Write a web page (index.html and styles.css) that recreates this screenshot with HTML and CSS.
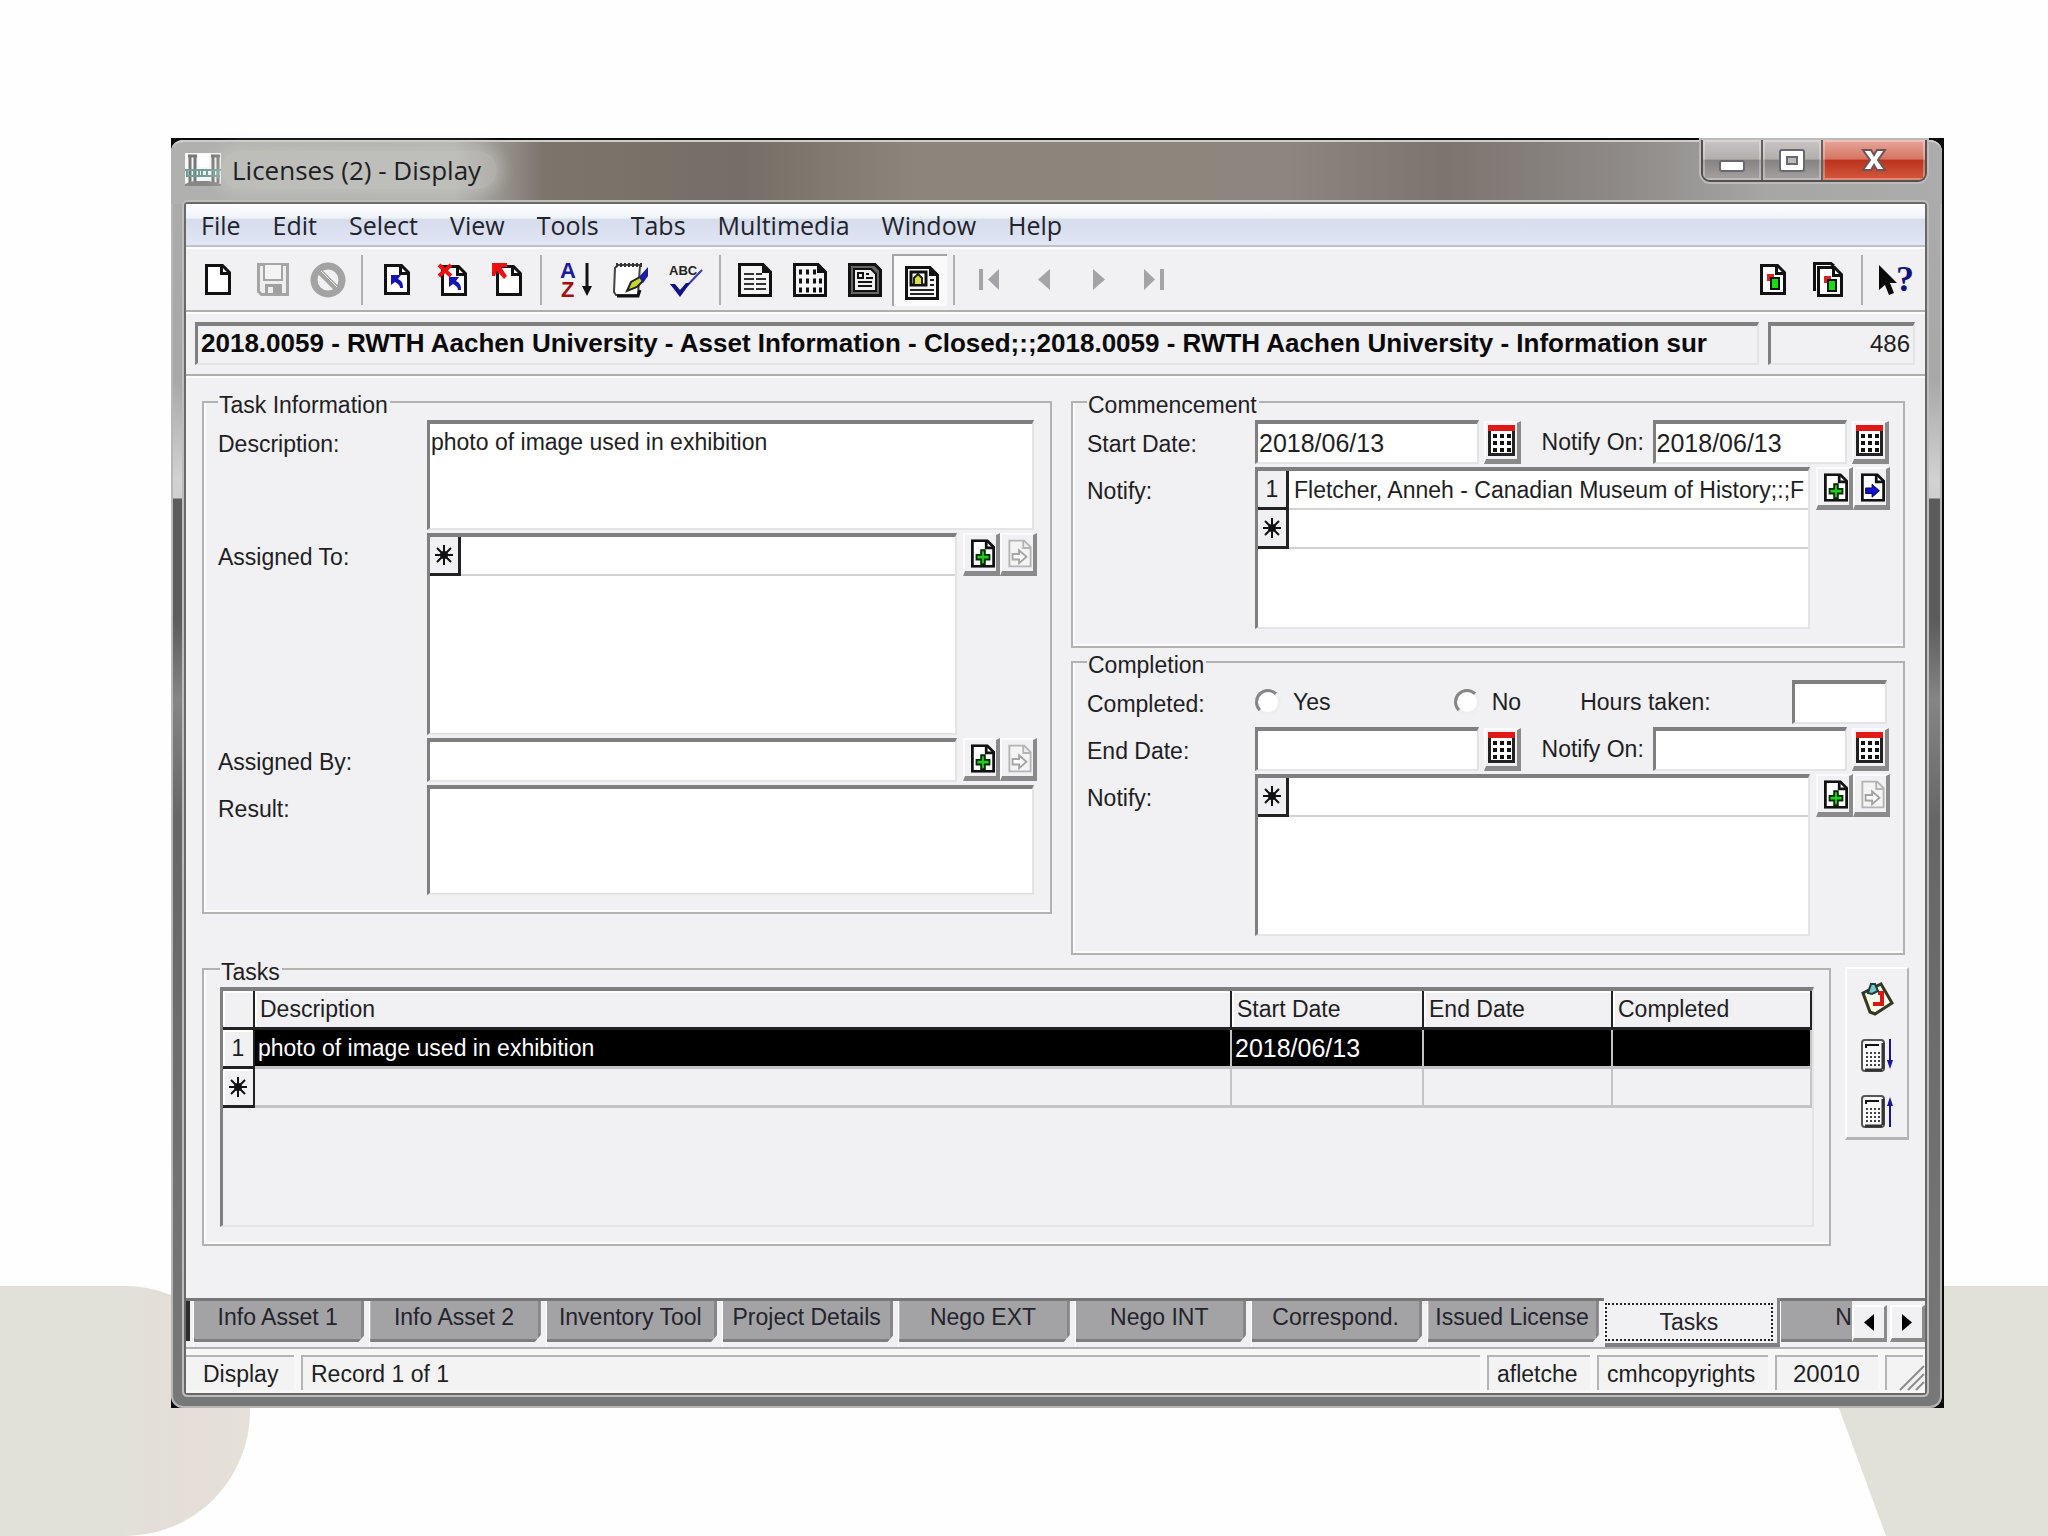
FILE: index.html
```html
<!DOCTYPE html>
<html lang="en">
<head>
<meta charset="utf-8">
<title>Licenses (2) - Display</title>
<link rel="stylesheet" href="styles.css">
</head>
<body>
<svg class="defs" aria-hidden="true">
  <symbol id="page" viewBox="0 0 26 31"><path d="M1.500 1.500H17.500L24.500 8.500V29.500H1.500Z" fill="#fff" stroke="#111" stroke-width="3"/><path d="M16.500 2V9.500H24" fill="none" stroke="#111" stroke-width="3"/></symbol>
  <symbol id="add" viewBox="0 0 26 31"><use href="#page"/><path d="M11 12h4v5h5v5h-5v5h-4v-5H6v-5h5z" fill="#1fd01f" stroke="#042a04" stroke-width="2"/></symbol>
  <symbol id="go" viewBox="0 0 26 31"><use href="#page"/><path d="M5 16h7v-4l8 7-8 7v-4H5z" fill="#1010d0" stroke="#000040" stroke-width="1"/></symbol>
  <symbol id="go-off" viewBox="0 0 26 31"><path d="M1.500 1.500H17.500L24.500 8.500V29.500H1.500ZM16.500 2V9.500H24" fill="#f4f4f4" stroke="#b4b4b4" stroke-width="2"/><path d="M5 16h7v-4l8 7-8 7v-4H5z" fill="#fff" stroke="#a4a4a4" stroke-width="2"/></symbol>
  <symbol id="calendar" viewBox="0 0 27 31"><path d="M1.500 2V29.500H25.500V2Z" fill="#fff" stroke="#222" stroke-width="3"/><path d="M0 0H27V6H0Z" fill="#e01818"/><path d="M5 11h4m3 0h4m3 0h4M5 18h4m3 0h4m3 0h4M5 25h4m3 0h4m3 0h4" stroke="#111" stroke-width="4"/></symbol>
  <symbol id="star" viewBox="0 0 22 22"><path d="M11 1V21M2 11H20M4 4L18 18M18 4L4 18" stroke="#111" stroke-width="2"/><circle cx="11" cy="11" r="4" fill="#111"/></symbol>
  <symbol id="calc" viewBox="0 0 24 33"><rect x="1" y="1" width="22" height="31" rx="3" fill="#fafafa" stroke="#555" stroke-width="2"/><path d="M22 4v26M4 31h17" stroke="#333" stroke-width="3"/><path d="M5 9V6h13" fill="none" stroke="#111" stroke-width="2"/><path d="M5 14h14M5 18h14M5 22h14M5 26h14" stroke="#444" stroke-width="2" stroke-dasharray="2 2"/></symbol>
</svg>
<div class="shape shape-left"></div>
<div class="shape shape-right"></div>

<main class="window">
 <div class="frame">
  <header class="titlebar">
    <svg class="app-icon" viewBox="0 0 36 33"><path d="M0 0H36V33H0Z" fill="#f8f8f8"/><path d="M3 3h9M26 3h9M5 4v26M10 4v26M28 4v26M33 4v26" stroke="#777" stroke-width="3"/><path d="M0 31c8-4 12-3 18-3s12 0 18 3v2H0z" fill="#888"/><path d="M0 17h36M1 23h34M2 16v8M9 17h5v6H9zM17 17h5v6h-5zM25 17h4v6M33 16v9" fill="none" stroke="#6fa096" stroke-width="2"/><path d="M13 1h11v13H13z" fill="#fff"/></svg>
    <h1 class="title">Licenses (2) - Display</h1>
    <div class="caption">
      <button class="cap cap-min" aria-label="Minimize"><svg width="28" height="14"><rect x="2" y="2" width="24" height="10" rx="2" fill="#fff" stroke="#666873" stroke-width="2"/></svg></button>
      <button class="cap cap-max" aria-label="Maximize"><svg width="28" height="25"><rect x="2" y="2" width="24" height="21" rx="2" fill="#fff" stroke="#666873" stroke-width="2"/><rect x="9" y="9" width="10" height="7" fill="#bbb" stroke="#666873" stroke-width="2"/></svg></button>
      <button class="cap cap-close" aria-label="Close"><svg width="28" height="26"><path d="M3 3h8l3 5 3-5h8l-7 10 7 10h-8l-3-5-3 5H3l7-10z" fill="#fff" stroke="#6b5558" stroke-width="2"/></svg></button>
    </div>
  </header>

  <div class="client">
    <nav class="menubar">
      <a href="#">File</a><a href="#">Edit</a><a href="#">Select</a><a href="#">View</a><a href="#">Tools</a><a href="#">Tabs</a><a href="#">Multimedia</a><a href="#">Window</a><a href="#">Help</a>
    </nav>

    <div class="toolbar">
      <button class="tool" aria-label="New"><svg width="26" height="31"><use href="#page"/></svg></button>
      <button class="tool" aria-label="Save"><svg width="32" height="33" viewBox="0 0 32 33"><path d="M1.500 1.500H30.500V31.500H4.500L1.500 28.500Z" fill="#eee" stroke="#a5a5a5" stroke-width="3"/><path d="M7 2V17H25V2" fill="#f4f4f4" stroke="#a5a5a5" stroke-width="2"/><path d="M8 21H25V31H8Z" fill="#a0a0a0"/><path d="M11 24h5v6h-5z" fill="#eee"/></svg></button>
      <button class="tool" aria-label="Cancel"><svg width="36" height="36" viewBox="0 0 36 36"><circle cx="18" cy="18" r="14" fill="none" stroke="#a3a3a3" stroke-width="7"/><path d="M8 8L28 28" stroke="#a3a3a3" stroke-width="6"/><path d="M11 9L27 25" stroke="#f2f2f2" stroke-width="1"/></svg></button>
      <span class="sep"></span>
      <button class="tool" aria-label="Attach"><svg width="26" height="31" viewBox="0 0 26 31"><use href="#page"/><path d="M7 11h10l-3 4c4 2 5 4 5 9h-3c0-3-2-4-5-6l-4 3z" fill="#1414b8"/></svg></button>
      <button class="tool" aria-label="Discard and attach"><svg width="30" height="33" viewBox="0 0 30 33"><g transform="translate(4 2)"><use href="#page" width="26" height="31"/><path d="M8 12h10l-3 4c4 2 5 4 5 9h-3c0-3-2-4-5-6l-4 3z" fill="#1414b8"/></g><path d="M2 2L14 13M14 2L2 13" stroke="#ee1010" stroke-width="4"/></svg></button>
      <button class="tool" aria-label="Discard"><svg width="30" height="33" viewBox="0 0 30 33"><use href="#page" x="4" y="2" width="26" height="31"/><path d="M0 0h15v4H9l6 9-3 3-7-8-2 5H0z" fill="#ee1010"/></svg></button>
      <span class="sep"></span>
      <button class="tool" aria-label="Sort"><svg width="32" height="36" viewBox="0 0 32 36"><text x="0" y="16" class="az" fill="#1c1c9c">A</text><text x="1" y="35" class="az" fill="#a01010">Z</text><path d="M27 1V28" stroke="#111" stroke-width="3"/><path d="M22 24h10l-5 10z" fill="#111"/></svg></button>
      <button class="tool" aria-label="Edit notes"><svg width="36" height="36" viewBox="0 0 36 36"><path d="M2 6L5 3H27L25 33H3L1 30Z" fill="#fff" stroke="#444" stroke-width="2"/><path d="M4 34H25L27 28" fill="none" stroke="#111" stroke-width="3"/><path d="M3 3H29" stroke="#333" stroke-width="4" stroke-dasharray="2 2"/><path d="M14 29l4-9 9-5 3 4-6 6z" fill="#c9d62e" stroke="#222" stroke-width="2"/><path d="M26 15l9-10v9l-5 7z" fill="#1c1ca8"/></svg></button>
      <button class="tool" aria-label="Spell check"><svg width="34" height="34" viewBox="0 0 34 34"><text x="0" y="12" class="abc">ABC</text><path d="M33 7L12 29" stroke="#3a3ac0" stroke-width="2"/><path d="M1 21h5l5 6 6-7 4 0L11 34Z" fill="#10108c"/></svg></button>
      <span class="sep"></span>
      <button class="tool" aria-label="List"><svg width="34" height="34" viewBox="0 0 34 34"><path d="M1.500 1.500H25L32.500 9V32.500H1.500Z" fill="#f6f6f6" stroke="#111" stroke-width="3"/><path d="M26 2V8H32" fill="none" stroke="#111" stroke-width="4"/><path d="M6 11h10M6 16h10M6 21h10M6 26h10M18 11h6M18 16h10M18 21h10M18 26h10" stroke="#333" stroke-width="2"/></svg></button>
      <button class="tool" aria-label="Contact sheet"><svg width="34" height="34" viewBox="0 0 34 34"><path d="M1.500 1.500H25L32.500 9V32.500H1.500Z" fill="#f6f6f6" stroke="#111" stroke-width="3"/><path d="M26 2V8H32" fill="none" stroke="#111" stroke-width="4"/><path d="M6 9h3m4 0h3m4 0h3M6 18h3m4 0h3m4 0h3m3 0h3M6 27h3m4 0h3m4 0h3m3 0h3" stroke="#111" stroke-width="5"/></svg></button>
      <button class="tool" aria-label="Page view"><svg width="34" height="34" viewBox="0 0 34 34"><path d="M1.500 1.500H27L32.500 7V32.500H1.500Z" fill="#666" stroke="#111" stroke-width="3"/><path d="M6 6h17l5 5v17H6z" fill="#eee" stroke="#111" stroke-width="2"/><path d="M10 10h5v5h-5zM18 11h3M18 15h7M10 19h14M10 23h14" fill="none" stroke="#111" stroke-width="2"/></svg></button>
      <button class="tool tool-on" aria-label="Details" aria-pressed="true"><svg width="34" height="34" viewBox="0 0 34 34"><path d="M1.500 1.500H25L32.500 9V32.500H1.500Z" fill="#f6f6f6" stroke="#111" stroke-width="3"/><path d="M26 2V8H32" fill="none" stroke="#111" stroke-width="4"/><path d="M6 6h15v13H6z" fill="#fff" stroke="#111" stroke-width="3"/><path d="M9 18v-6l4-4 4 4v6" fill="#d8e040" stroke="#222" stroke-width="2"/><path d="M25 14h4M25 19h4M5 24h24M5 28h24" stroke="#222" stroke-width="2"/></svg></button>
      <span class="sep"></span>
      <button class="tool" aria-label="First"><svg width="20" height="21"><path d="M0 0h4v21H0zM20 0v21L9 10.500z" fill="#a3a3a8"/></svg></button>
      <button class="tool" aria-label="Previous"><svg width="12" height="21"><path d="M12 0v21L0 10.500z" fill="#a3a3a8"/></svg></button>
      <button class="tool" aria-label="Next"><svg width="12" height="21"><path d="M0 0v21l12-10.500z" fill="#a3a3a8"/></svg></button>
      <button class="tool" aria-label="Last"><svg width="20" height="21"><path d="M16 0h4v21h-4zM0 0v21l11-10.500z" fill="#a3a3a8"/></svg></button>
      <span class="spring"></span>
      <button class="tool" aria-label="View attachment"><svg width="26" height="31" viewBox="0 0 26 31"><use href="#page"/><path d="M7 10h7v7H7z" fill="#e02020"/><path d="M11 14h8v11h-8z" fill="#10e010" stroke="#111" stroke-width="2"/></svg></button>
      <button class="tool" aria-label="View all attachments"><svg width="30" height="35" viewBox="0 0 30 35"><path d="M1.500 29V1.500H18L21 4" fill="#fff" stroke="#111" stroke-width="3"/><g transform="translate(4 4)"><use href="#page" width="26" height="31"/><path d="M7 10h7v7H7z" fill="#e02020"/><path d="M11 14h8v11h-8z" fill="#10e010" stroke="#111" stroke-width="2"/></g></svg></button>
      <span class="sep"></span>
      <button class="tool" aria-label="Context help"><svg width="38" height="34" viewBox="0 0 38 34"><path d="M1 2V27L7 22 11 32 16 30 12 20H19Z" fill="#0a0a0a"/><text x="18" y="28" class="qm">?</text></svg></button>
    </div>

    <div class="recordbar">
      <input class="sunk summary" type="text" readonly aria-label="Record summary" value="2018.0059 - RWTH Aachen University - Asset Information - Closed;:;2018.0059 - RWTH Aachen University - Information sur">
      <input class="sunk irn" type="text" readonly aria-label="Record number" value="486">
    </div>

    <form class="form">
      <div class="columns">
        <fieldset class="group">
          <legend>Task Information</legend>
          <div class="rows rows-task">
            <label for="desc">Description:</label>
            <textarea class="sunk memo" id="desc">photo of image used in exhibition</textarea>
            <label for="to">Assigned To:</label>
            <div class="lookup">
              <div class="sunk list tall">
                <div class="line"><span class="sel"><svg width="22" height="22"><use href="#star"/></svg></span><input id="to" type="text"></div>
              </div>
              <div class="pair"><button type="button" class="btn" aria-label="Attach party"><svg width="24" height="29"><use href="#add"/></svg></button><button type="button" class="btn" aria-label="View party" disabled><svg width="24" height="29"><use href="#go-off"/></svg></button></div>
            </div>
            <label for="by">Assigned By:</label>
            <div class="lookup">
              <input class="sunk field" id="by" type="text">
              <div class="pair"><button type="button" class="btn" aria-label="Attach party"><svg width="24" height="29"><use href="#add"/></svg></button><button type="button" class="btn" aria-label="View party" disabled><svg width="24" height="29"><use href="#go-off"/></svg></button></div>
            </div>
            <label for="result">Result:</label>
            <textarea class="sunk memo" id="result"></textarea>
          </div>
        </fieldset>

        <div class="stack">
          <fieldset class="group">
            <legend>Commencement</legend>
            <div class="rows rows-date">
              <label for="start">Start Date:</label>
              <div class="dates">
                <input class="sunk field" id="start" type="text" value="2018/06/13">
                <button type="button" class="btn" aria-label="Pick start date"><svg width="27" height="31"><use href="#calendar"/></svg></button>
                <label for="start-on">Notify On:</label>
                <input class="sunk field" id="start-on" type="text" value="2018/06/13">
                <button type="button" class="btn" aria-label="Pick notify date"><svg width="27" height="31"><use href="#calendar"/></svg></button>
              </div>
              <label for="n1">Notify:</label>
              <div class="lookup">
                <div class="sunk list">
                  <div class="line"><span class="sel">1</span><input id="n1" type="text" value="Fletcher, Anneh - Canadian Museum of History;:;F"></div>
                  <div class="line"><span class="sel"><svg width="22" height="22"><use href="#star"/></svg></span><input type="text" aria-label="New notify entry"></div>
                </div>
                <div class="pair"><button type="button" class="btn" aria-label="Attach party"><svg width="24" height="29"><use href="#add"/></svg></button><button type="button" class="btn" aria-label="View party"><svg width="24" height="29"><use href="#go"/></svg></button></div>
              </div>
            </div>
          </fieldset>

          <fieldset class="group">
            <legend>Completion</legend>
            <div class="rows rows-date">
              <span class="label">Completed:</span>
              <div class="answers">
                <label class="choice"><input type="radio" name="done">Yes</label>
                <label class="choice"><input type="radio" name="done">No</label>
                <label for="hours">Hours taken:</label>
                <input class="sunk field" id="hours" type="text">
              </div>
              <label for="end">End Date:</label>
              <div class="dates">
                <input class="sunk field" id="end" type="text">
                <button type="button" class="btn" aria-label="Pick end date"><svg width="27" height="31"><use href="#calendar"/></svg></button>
                <label for="end-on">Notify On:</label>
                <input class="sunk field" id="end-on" type="text">
                <button type="button" class="btn" aria-label="Pick notify date"><svg width="27" height="31"><use href="#calendar"/></svg></button>
              </div>
              <label for="n2">Notify:</label>
              <div class="lookup">
                <div class="sunk list">
                  <div class="line"><span class="sel"><svg width="22" height="22"><use href="#star"/></svg></span><input id="n2" type="text"></div>
                </div>
                <div class="pair"><button type="button" class="btn" aria-label="Attach party"><svg width="24" height="29"><use href="#add"/></svg></button><button type="button" class="btn" aria-label="View party" disabled><svg width="24" height="29"><use href="#go-off"/></svg></button></div>
              </div>
            </div>
          </fieldset>
        </div>
      </div>

      <div class="bottom">
        <fieldset class="group">
          <legend>Tasks</legend>
          <div class="sunk tablebox">
            <table class="tasks">
              <colgroup><col class="c-sel"><col><col class="c-start"><col class="c-end"><col class="c-done"></colgroup>
              <thead><tr><th></th><th>Description</th><th>Start Date</th><th>End Date</th><th>Completed</th></tr></thead>
              <tbody>
                <tr class="picked"><th>1</th><td>photo of image used in exhibition</td><td class="date">2018/06/13</td><td></td><td></td></tr>
                <tr><th><svg width="22" height="22"><use href="#star"/></svg></th><td></td><td></td><td></td><td></td></tr>
              </tbody>
            </table>
          </div>
        </fieldset>
        <div class="side">
          <button type="button" class="tool" aria-label="Task template"><svg width="32" height="34" viewBox="0 0 32 34"><path d="M2 11L20 2 31 21 14 32 9 30Z" fill="#fbfbe8" stroke="#333820" stroke-width="3"/><path d="M17 11h4v11h-7v-2" fill="none" stroke="#d81818" stroke-width="4"/><path d="M7 11l3-9h4l3 7-6 3z" fill="#7cc8c8" stroke="#1c3c40" stroke-width="2"/></svg></button>
          <button type="button" class="tool" aria-label="Calculate down"><svg width="32" height="33" viewBox="0 0 32 33"><use href="#calc" width="24" height="33"/><path d="M29 0V26" stroke="#1414a0" stroke-width="2"/><path d="M26 21h6l-3 9z" fill="#1414a0"/></svg></button>
          <button type="button" class="tool" aria-label="Calculate up"><svg width="32" height="33" viewBox="0 0 32 33"><use href="#calc" width="24" height="33"/><path d="M29 32V6" stroke="#1414a0" stroke-width="2"/><path d="M26 11h6l-3-9z" fill="#1414a0"/></svg></button>
        </div>
      </div>
    </form>

    <div class="tabs">
      <span class="tab-stub"></span>
      <div class="tablist" role="tablist">
        <div class="slot"><button class="tab" role="tab">Info Asset 1</button></div>
        <div class="slot"><button class="tab" role="tab">Info Asset 2</button></div>
        <div class="slot"><button class="tab" role="tab">Inventory Tool</button></div>
        <div class="slot"><button class="tab" role="tab">Project Details</button></div>
        <div class="slot"><button class="tab" role="tab">Nego EXT</button></div>
        <div class="slot"><button class="tab" role="tab">Nego INT</button></div>
        <div class="slot"><button class="tab" role="tab">Correspond.</button></div>
        <div class="slot"><button class="tab" role="tab">Issued License</button></div>
        <div class="slot slot-on"><button class="tab tab-on" role="tab" aria-selected="true"><span>Tasks</span></button></div>
        <div class="slot slot-cut"><button class="tab" role="tab">N</button></div>
      </div>
      <button class="scroll" aria-label="Scroll tabs left"><svg width="10" height="17"><path d="M10 0v17L0 8.500z" fill="#000"/></svg></button>
      <button class="scroll" aria-label="Scroll tabs right"><svg width="10" height="17"><path d="M0 0v17l10-8.500z" fill="#000"/></svg></button>
    </div>

    <footer class="status">
      <span class="cell cell-mode">Display</span>
      <span class="cell cell-record">Record 1 of 1</span>
      <span class="cell cell-user">afletche</span>
      <span class="cell cell-group">cmhcopyrights</span>
      <span class="cell cell-port">20010</span>
      <span class="cell cell-grip"><svg width="26" height="26"><path d="M2 26L26 2M10 26L26 10M18 26l8-8" stroke="#8c8c8c" stroke-width="2"/></svg></span>
    </footer>
  </div>
 </div>
</main>
</body>
</html>
```
FILE: styles.css
```css
* { box-sizing: border-box; }

body {
  margin: 0;
  min-height: 100vh;
  padding: 138px 104px 128px 171px;
  position: relative;
  overflow-x: hidden;
  background: #fefefe;
  color: #1e1e24;
  font: 23px/26px "Liberation Sans", Arial, sans-serif;
}

button, input, textarea { font: inherit; color: inherit; margin: 0; }
button { padding: 0; border: 0; background: none; }
svg { display: block; flex: none; overflow: visible; }
.defs { position: absolute; width: 0; height: 0; }

/* slide decoration behind the window */
.shape { position: absolute; bottom: 0; height: 250px; background: #e2e1d8; }
.shape-left {
  left: 0; width: 250px; border-radius: 0 125px 125px 0;
  background: linear-gradient(90deg, #e1e1d7 45%, #e4ded7 70%, #e5e0d8);
}
.shape-right { right: 0; width: 254px; clip-path: polygon(0 0, 100% 0, 100% 100%, 92px 100%); }

/* window frame */
.window { position: relative; background: #0a0a0a; padding: 2px 2px 0 0; }
.frame {
  padding: 0 17px 15px 15px;
  border-radius: 12px;
  background: linear-gradient(180deg, #acacac 0, #a8a8a8 240px, #d2d2d2 340px, #cfcfcf 358px, #5c5c5c 359px, #5c5c5c 480px, #858585 560px, #666 680px, #787878 100%);
  box-shadow: inset 0 0 0 2px #b9b7b5;
}
.titlebar {
  display: flex;
  align-items: flex-start;
  height: 64px;
  margin: 0 -17px 0 -15px;
  padding: 0 15px 0 14px;
  border-radius: 12px 12px 0 0;
  border-top: 2px solid #cfcdca;
  background: linear-gradient(90deg, #b0b0ae 0, #b3b3b0 16%, #7d756c 21%, #766e66 32%, #8d857b 42%, #8c867e 63%, #7c746f 72%, #8e8a87 82%, #a6a6a5 90%, #acacac 100%);
}
.app-icon { width: 36px; height: 33px; margin-top: 11px; }
.title {
  margin: 9px 0 0;
  padding: 0 16px 0 11px;
  font: 26px/38px "Open Sans", "Noto Sans", sans-serif;
  border-radius: 20px;
  background: rgba(205, 205, 200, .45);
  box-shadow: 0 0 14px 6px rgba(205, 205, 200, .45);
}
.caption {
  display: flex;
  margin: -2px 0 0 auto;
  height: 42px;
  border: 2px solid #55504e;
  border-top: 0;
  border-radius: 0 0 9px 9px;
  overflow: hidden;
  box-shadow: 0 0 0 2px #bdbbb9;
}
.cap {
  display: flex; align-items: center; justify-content: center;
  width: 60px;
  border-right: 2px solid #66615f;
  background: linear-gradient(180deg, #c8c5c4 0, #b1aeac 48%, #868282 50%, #a5a2a1 100%);
  box-shadow: inset 0 0 0 2px rgba(255, 255, 255, .3);
}
.cap-min { padding-top: 12px; }
.cap-close {
  width: 102px; border-right: 0;
  background: linear-gradient(180deg, #e6a79b 0, #d67462 48%, #b9321c 50%, #d4593d 100%);
}

.client {
  background: #f1f0f2;
  box-shadow: 0 0 0 2px #686868, 0 0 0 4px #bdbdbb;
  border-radius: 2px;
}
.menubar {
  display: flex; align-items: center; gap: 32px;
  height: 43px;
  padding: 0 15px;
  border-bottom: 2px solid #bfc0c8;
  background: linear-gradient(180deg, #fff 0, #eff3f9 34%, #d5dcec 38%, #e2e6f6 100%);
  font: 25px/34px "Open Sans", "Noto Sans", sans-serif;
}
.menubar a { color: #23232b; text-decoration: none; }

.toolbar {
  display: flex; align-items: center;
  height: 65px;
  padding: 0 1px 0 4px;
  border-top: 2px solid #fcfcfc;
  border-bottom: 2px solid #aeaeae;
  background: #f1f0f2;
}
.tool { display: flex; align-items: center; justify-content: center; width: 55px; height: 52px; }
.tool-on {
  padding: 4px 0 0 3px;
  border-top: 2px solid #a4a4a4; border-left: 2px solid #a4a4a4;
  background: #fafafa;
}
.sep { width: 2px; height: 50px; margin: 0 6px; background: #b0b0b0; }
.spring { flex: 1; }
.az { font: bold 22px "Liberation Sans", Arial, sans-serif; }
.abc { font: bold 13px "Liberation Sans", Arial, sans-serif; fill: #222; }
.qm { font: bold 36px "Liberation Serif", serif; fill: #10107c; }

.recordbar {
  display: flex; gap: 9px;
  padding: 8px 10px 9px 9px;
  border-top: 2px solid #fff;
  border-bottom: 2px solid #aeaeae;
}
.sunk {
  display: block;
  min-width: 0;
  border: solid;
  border-width: 4px 2px 2px 3px;
  border-color: #7f7f7f #e4e4e4 #e4e4e4 #7f7f7f;
  border-radius: 0;
  background: #fff;
  outline: 0;
}
.recordbar .sunk { height: 43px; padding: 0 3px 2px; background: #f1f0f2; }
.recordbar .summary { flex: 1; font-size: 26px; font-weight: bold; color: #0a0a0a; }
.irn { width: 147px; text-align: right; font-size: 24px; }

/* form */
.form { padding: 10px 20px 52px 16px; border-top: 2px solid #fbfbfb; }
.columns { display: grid; grid-template-columns: 850fr 834fr; gap: 19px; align-items: start; }
.stack { min-width: 0; }
.group {
  min-width: 0; margin: 0;
  padding: 4px 13px 17px 14px;
  border: 2px solid #b2b2b2;
  box-shadow: inset 2px 0 0 #fbfbfb, inset 0 -2px 0 #fbfbfb;
}
legend { padding: 6px 2px 0 1px; line-height: 22px; }
.rows { display: grid; row-gap: 3px; }
.rows-task { grid-template-columns: 209px 1fr; }
.rows-date { grid-template-columns: 168px 1fr; }
.rows > label, .rows > .label { padding-top: 11px; }
.memo { width: auto; height: 110px; margin-right: 3px; padding: 5px 1px; resize: none; overflow: hidden; }
.lookup { display: grid; grid-template-columns: 1fr 74px; gap: 6px; align-items: start; }
.field { width: 100%; height: 44px; padding: 0 1px; }
.list { height: 162px; overflow: hidden; }
.tall { height: 202px; }
.line { display: flex; height: 39px; border-bottom: 2px solid #d2d2d2; }
.line input { flex: 1; min-width: 0; border: 0; padding: 0 0 0 5px; background: none; outline: 0; }
.sel {
  display: flex; align-items: center; justify-content: center;
  width: 31px; height: 39px;
  background: #f1f0f2;
  border-right: 3px solid #222; border-bottom: 3px solid #222;
}
.pair { display: flex; }
.btn {
  display: flex; align-items: center; justify-content: center;
  width: 37px; height: 43px;
  background: #f1f0f2;
  border: solid;
  border-width: 2px 4px 5px 2px;
  border-color: #fbfbfb #8a8a8a #8a8a8a #fbfbfb;
}
.pair .btn { padding-left: 4px; }
.dates { display: grid; grid-template-columns: 223fr 38px 121px 194fr 38px; column-gap: 5px; align-items: center; }
.dates label { padding-left: 15px; white-space: nowrap; }
.rows-date input.field, .tasks .date { font-size: 25px; }
.answers { display: grid; grid-template-columns: 198fr 126fr 211fr 95px; padding-right: 3px; align-items: center; }
.choice { display: flex; align-items: center; gap: 12px; }
.choice input {
  appearance: none;
  width: 26px; height: 26px;
  border: 3px solid;
  border-color: #858585 #eee #eee #858585;
  border-radius: 50%;
  background: #fff;
}

/* task table */
.bottom { display: grid; grid-template-columns: 1fr 64px; gap: 14px; align-items: start; margin-right: -4px; }
.bottom .group { padding-left: 16px; padding-right: 15px; }
.tablebox { height: 240px; background: #f1f0f2; }
.tasks { width: 100%; table-layout: fixed; border-collapse: separate; border-spacing: 0; }
.c-sel { width: 32px; }
.c-start { width: 192px; }
.c-end { width: 189px; }
.c-done { width: 199px; }
.tasks th, .tasks td { height: 39px; padding: 0 3px; text-align: left; font-weight: normal; white-space: nowrap; overflow: hidden; }
.tasks th { border-right: 2px solid #222; border-bottom: 3px solid #222; box-shadow: inset 2px 2px 0 #fff; background: #f1f0f2; }
.tasks td { border-right: 2px solid #c4c4c4; border-bottom: 3px solid #c4c4c4; }
.tasks thead th { padding-left: 5px; }
.tasks tbody th { padding: 0 4px; text-align: center; }
.picked td { background: #000; color: #fff; }
.side {
  display: flex; flex-direction: column; align-items: center; gap: 4px;
  margin-top: 12px; padding: 4px 0 0;
  border: solid; border-width: 2px 2px 3px;
  border-color: #fff #b4b4b4 #b4b4b4 #fbfbfb;
}

/* page tabs */
.tabs { display: flex; height: 49px; border-top: 3px solid #777; }
.tab-stub { width: 4px; height: 40px; margin-right: 3px; background: #2c2c2c; }
.tablist { flex: 1; min-width: 0; display: grid; grid-template-columns: repeat(9, minmax(0, 1fr)) 72px; }
.slot { padding-right: 5px; border-left: 1px solid #fff; }
.tab {
  display: block; width: 100%; height: 41px; padding-bottom: 6px;
  border-bottom: 3px solid #7e7e82; border-right: 3px solid #85858a;
  background: #a3a3a6; color: #24242c;
  white-space: nowrap;
  clip-path: polygon(0 0, 100% 0, 100% 34px, calc(100% - 6px) 100%, 0 100%);
}
.slot-on { margin-top: -3px; padding: 0; background: #f1f0f2; }
.tab-on { height: 49px; padding: 5px 4px 4px 0; background: #f1f0f2; border-bottom-width: 4px; clip-path: none; }
.tab-on span { display: block; padding: 3px 0; border: 2px dotted #222; line-height: 28px; }
.slot-cut { padding: 0; }
.slot-cut .tab { text-align: right; border-right: 0; clip-path: none; }
.scroll {
  display: flex; align-items: center; justify-content: center;
  width: 35px; height: 37px; margin: 4px 3px 0 0;
  border: solid; border-width: 2px 3px 4px 2px;
  border-color: #fff #8a8a8a #8a8a8a #fff;
  background: #f1f0f2;
}
.scroll + .scroll { margin-right: 0; }

.status {
  display: flex; gap: 7px;
  padding: 6px 2px 3px 0;
  border-top: 2px solid #b0b0b0;
  background: #f7f7f8;
}
.cell { height: 35px; padding: 0 8px; line-height: 34px; border-top: 2px solid #b4b4b4; border-left: 2px solid #b4b4b4; background: #f3f3f3; white-space: nowrap; }
.cell-mode { width: 108px; padding-left: 17px; border-left: 0; }
.cell-record { flex: 1; }
.cell-user { width: 103px; }
.cell-group { width: 171px; }
.cell-port { width: 103px; padding-left: 16px; font-size: 24px; }
.cell-grip { width: 38px; padding: 7px 0 0 11px; }
```
